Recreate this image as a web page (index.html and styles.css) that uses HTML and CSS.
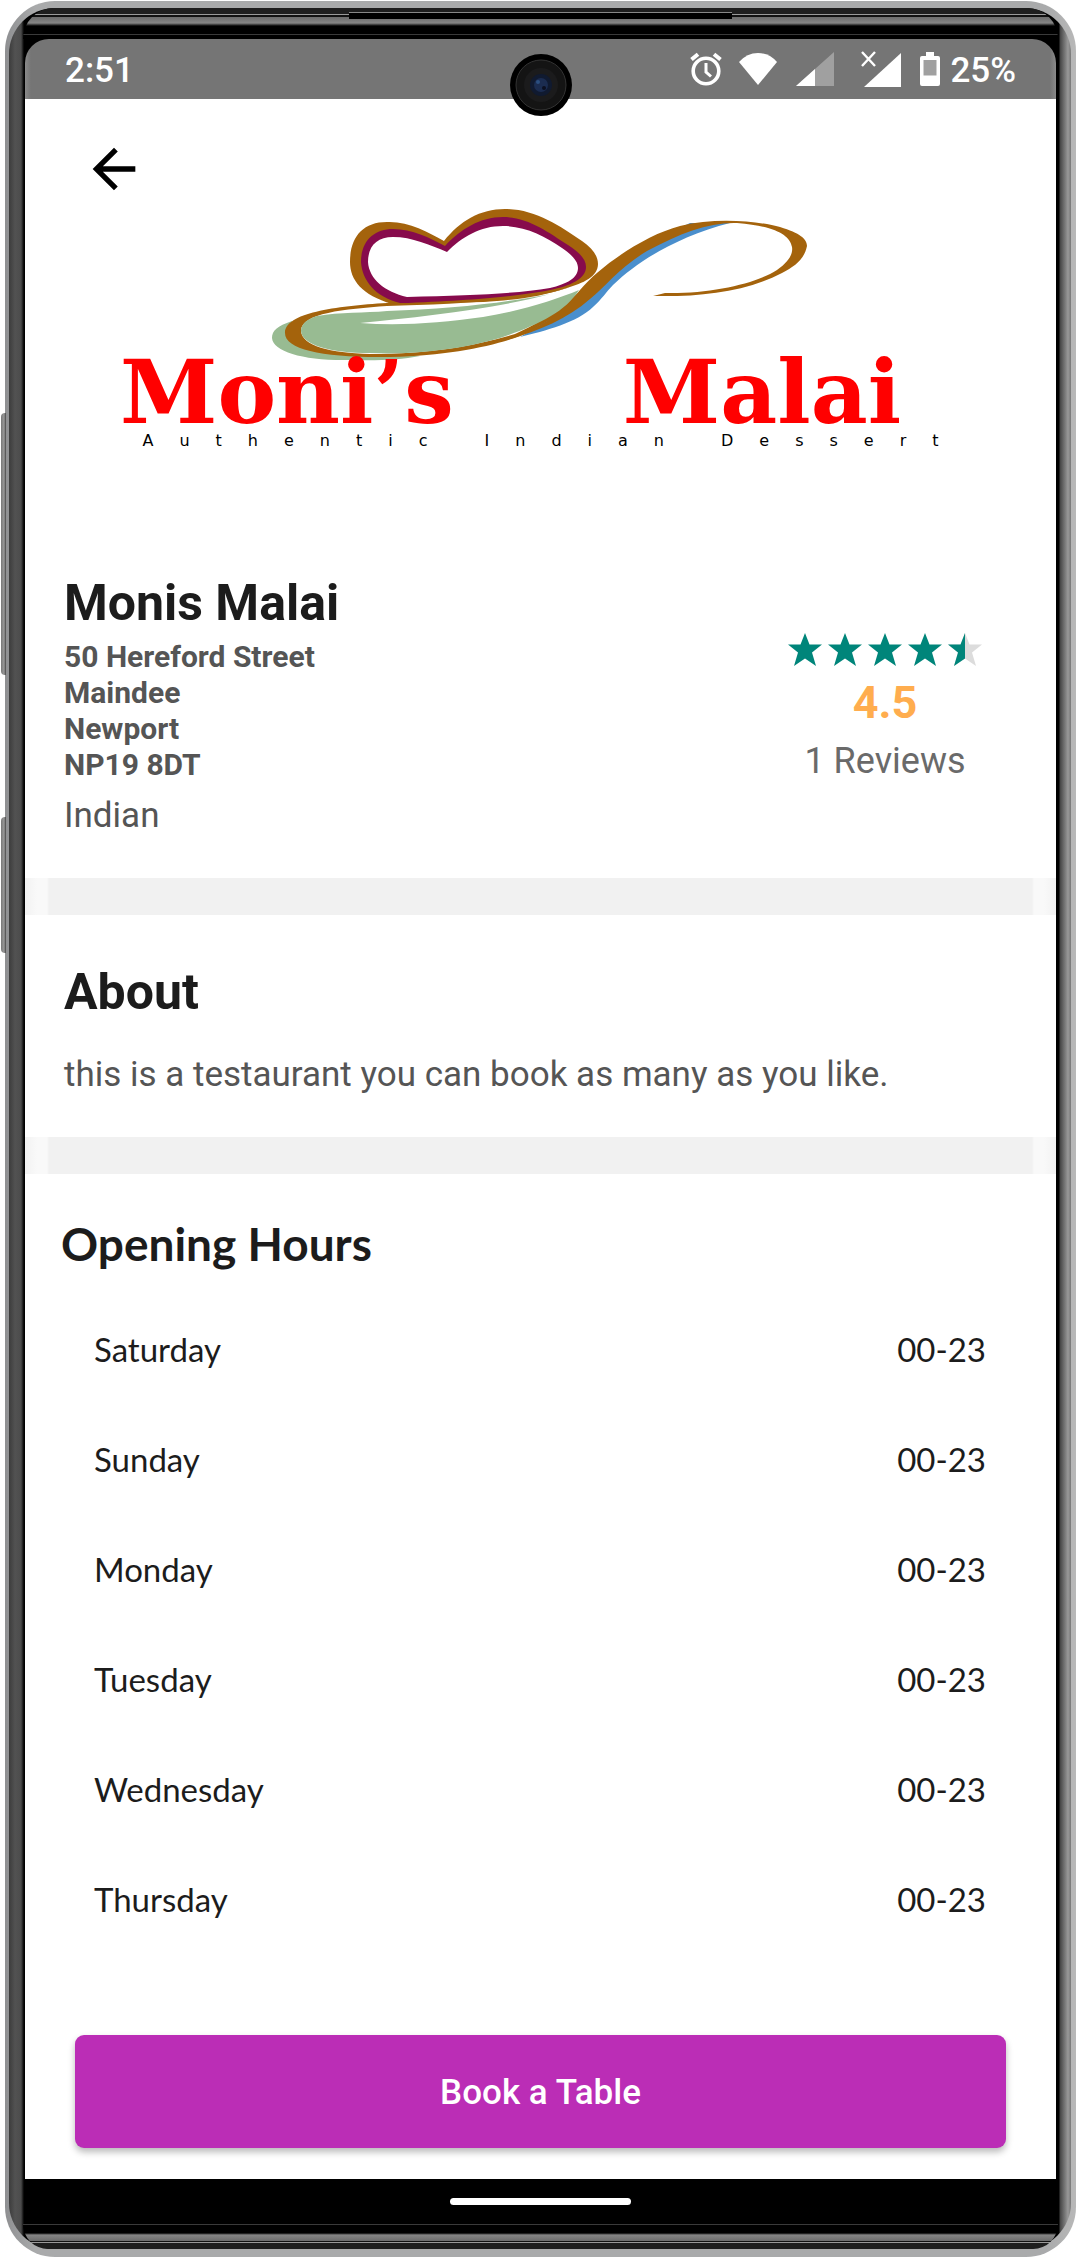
FILE: index.html
```html
<!DOCTYPE html>
<html lang="en">
<head>
<meta charset="utf-8">
<meta name="viewport" content="width=device-width, initial-scale=1">
<title>Monis Malai</title>
<link rel="stylesheet" href="styles.css">
</head>
<body>
<div class="phone">
  <span class="side-key side-key-volume"></span>
  <span class="side-key side-key-power"></span>
  <div class="bezel">
    <div class="edge edge-top"><span class="earpiece"></span></div>
    <div class="screen">
      <header class="status">
        <span class="clock">2:51</span>
        <div class="status-icons">
          <svg class="alarm" width="32" height="34" viewBox="0 0 32 34" fill="none" stroke="#fff"><circle cx="16" cy="19" r="12.8" stroke-width="3.6"/><path d="M16 11v9l5 4.500" stroke-width="3"/><path d="M1.500 7.500 8 2.200M30.500 7.500 24 2.200" stroke-width="4"/></svg>
          <svg class="wifi" width="38" height="34" viewBox="0 0 38 34" fill="#fff"><path d="M19 33 0 10Q8 1 19 1t19 9z"/></svg>
          <svg class="signal" width="38" height="34" viewBox="0 0 38 34"><path d="M38 0v34H0z" fill="#a0a0a0"/><path d="M19 17v17H0z" fill="#fff"/></svg>
          <svg class="signal-off" width="40" height="38" viewBox="0 0 40 38"><path d="M40 3v34H3z" fill="#fff"/><path d="m1 2 13 14M14 2 1 16" stroke="#fff" stroke-width="2.400"/></svg>
          <svg class="battery" width="20" height="34" viewBox="0 0 20 34"><path d="M6 0h8v4h4a2 2 0 0 1 2 2v26a2 2 0 0 1-2 2H2a2 2 0 0 1-2-2V6a2 2 0 0 1 2-2h4z" fill="#fff"/><path d="M3.500 8h13v15.500h-13z" fill="#a0a0a0"/></svg>
          <span>25%</span>
        </div>
        <svg class="camera" width="62" height="62" viewBox="0 0 62 62"><circle cx="31" cy="31" r="31"/><circle cx="31" cy="31" r="25" fill="#141414" stroke="#333"/><circle cx="31" cy="31" r="17" fill="#1b1b1c"/><circle cx="31" cy="31" r="11" fill="#101a30"/><circle cx="31" cy="31" r="7" fill="#1b2c50"/><circle cx="28" cy="28" r="2" fill="#2b4f80"/><circle cx="34" cy="34" r="2" fill="#0c1020"/></svg>
      </header>

      <main>
        <section class="hero">
          <button class="back" aria-label="Back"><svg width="64" height="64" viewBox="0 0 24 24"><path d="M20 11H7.830l5.590-5.590L12 4l-8 8 8 8 1.410-1.410L7.830 13H20z"/></svg></button>
          <svg class="art" width="542" height="160" viewBox="270 204 542 160">
            <path fill="#98bb92" d="M292 321C277 326 272 331 272 338C273 352 305 361 350 360C375 361 400 360 420 356L300 345Z"/>
            <path fill="#a4630c" d="M387 303C335 306 285 313 285 333C285 350 325 358 390 357C455 355 500 345 530 332C560 317 580 297 597 277L567 288C530 299 450 303 387 303Z"/>
            <path fill="#fff" d="M387 306C345 309 301 313 301 331C302 346 330 353 370 354C430 354 475 346 515 334C553 317 576 296 602 270L567 288C530 301 450 304 387 306Z"/>
            <path fill="#98bb92" d="M317 316C340 312 365 313 387 311C450 309 505 303 550 294C500 308 420 317 360 323C400 326 440 323 483 317C520 311 555 300 579 290C565 313 535 326 500 338C460 350 410 355 370 353C330 353 302 345 301 331C301 324 307 319 317 316Z"/>
            <path fill="#4a8fcd" d="M520 337C545 331 578 322 593 307C602 299 606 292 613 285C640 259 680 236 730 223L690 223L640 247L575 305Z"/>
            <path fill="#a4630c" d="M500 342C550 326 568 306 580 290C600 266 645 235 680 226C715 217 758 221 780 227C800 233 807 239 807 246C804 260 795 266 782 273C745 292 700 297 653 296L665 293C710 294 755 284 777 270C790 261 793 253 792 247C790 235 775 226 737 223C710 222 680 233 647 251C620 267 605 287 590 299C565 321 535 332 500 342Z"/>
            <path fill="#a4630c" d="M392 304C362 295 350 280 350 262C350 238 362 222 387 222C408 221 428 232 444 241C460 221 480 209 505 209C535 209 560 226 582 241C593 249 598 256 598 264C598 277 583 283 567 288C540 297 515 300 483 302Z"/>
            <path fill="#870b4c" d="M400 303C375 297 362 280 361 262C361 241 374 229 393 229C412 229 430 238 445 246C461 229 480 217 503 217C528 217 548 232 568 245C579 252 586 259 586 267C586 279 570 286 550 290C520 296 480 300 408 303Z"/>
            <path fill="#fff" d="M407 297C385 292 369 279 368 262C368 246 377 237 393 237C412 237 430 245 447 252C462 237 480 226 503 226C525 226 545 236 562 248C572 255 578 261 578 268C578 278 567 284 550 288C515 294 470 295 407 297Z"/>
          </svg>
          <div class="brand"><span>Moni’s</span> <span>Malai</span></div>
          <div class="tagline">Authentic Indian Dessert</div>
        </section>

        <section class="info">
          <div>
            <h1>Monis Malai</h1>
            <address>50 Hereford Street<br>Maindee<br>Newport<br>NP19 8DT</address>
            <p class="cuisine">Indian</p>
          </div>
          <div class="rating">
            <div class="stars" role="img" aria-label="4.5 out of 5 stars">
              <svg width="34" height="34" viewBox="0 0 34 34"><path d="m17 0 4.500 11.500H34l-10 8L28 33l-11-7.500L6 33l4-13.500-10-8h12.500z"/></svg>
              <svg width="34" height="34" viewBox="0 0 34 34"><path d="m17 0 4.500 11.500H34l-10 8L28 33l-11-7.500L6 33l4-13.500-10-8h12.500z"/></svg>
              <svg width="34" height="34" viewBox="0 0 34 34"><path d="m17 0 4.500 11.500H34l-10 8L28 33l-11-7.500L6 33l4-13.500-10-8h12.500z"/></svg>
              <svg width="34" height="34" viewBox="0 0 34 34"><path d="m17 0 4.500 11.500H34l-10 8L28 33l-11-7.500L6 33l4-13.500-10-8h12.500z"/></svg>
              <svg width="34" height="34" viewBox="0 0 34 34"><path class="star-off" d="m17 0 4.500 11.500H34l-10 8L28 33l-11-7.500L6 33l4-13.500-10-8h12.500z"/><path d="M17 0v25.500L6 33l4-13.500-10-8h12.500z"/></svg>
            </div>
            <div class="score">4.5</div>
            <div class="reviews">1 Reviews</div>
          </div>
        </section>

        <section class="about">
          <h2>About</h2>
          <p>this is a testaurant you can book as many as you like.</p>
        </section>

        <section class="hours">
          <h2>Opening Hours</h2>
          <table>
            <tr><th scope="row">Saturday</th><td>00-23</td></tr>
            <tr><th scope="row">Sunday</th><td>00-23</td></tr>
            <tr><th scope="row">Monday</th><td>00-23</td></tr>
            <tr><th scope="row">Tuesday</th><td>00-23</td></tr>
            <tr><th scope="row">Wednesday</th><td>00-23</td></tr>
            <tr><th scope="row">Thursday</th><td>00-23</td></tr>
          </table>
        </section>

        <div class="action"><button class="book">Book a Table</button></div>
      </main>
      <div class="nav"><span class="home-bar"></span></div>
    </div>
    <div class="edge edge-bottom"></div>
  </div>
</div>
</body>
</html>
```
FILE: styles.css
```css
* { box-sizing: border-box; }
body { margin: 0; background: #fff; font-family: Roboto, "Liberation Sans", sans-serif; color: #1c1c1c; }
h1, h2, p { margin: 0; }
button { border: 0; cursor: pointer; font: inherit; }
svg { display: block; flex: none; }

/* device shell */
.phone {
  position: relative;
  margin: 1px 1px 1px 5px;
  padding: 7px 5px 8px 4px;
  border-radius: 50px;
  background: linear-gradient(90deg, #8e8f91 0, #a9aaab 30px, #a9aaab calc(100% - 30px), #b8b8b8 100%);
}
.side-key {
  position: absolute;
  left: -4px;
  width: 5px;
  border-radius: 4px 0 0 4px;
  background: linear-gradient(90deg, #777, #999 60%, #444);
}
.side-key-volume { top: 412px; height: 262px; }
.side-key-power { top: 816px; height: 136px; }
.bezel {
  padding: 0 15px 0 16px;
  border-radius: 46px;
  background: linear-gradient(90deg, #3c3c3c 0, #525252 6px, #4c4c4c 12px, #000 15px, #000 calc(100% - 12px), #444 calc(100% - 11px), #999 calc(100% - 3px), #777 100%);
}
.edge { margin: 0 -2px; }
.edge-top {
  height: 31px;
  border-radius: 34px 34px 0 0;
  background: linear-gradient(#1e1e1e 0 6px, #999 6px 7px, #111 7px 9px, #6c6c6c 9px, #858585 15px, #000 18px, #000 26px, #3a3a3a 26px 27px, #000 27px);
}
.edge-bottom {
  height: 25px;
  border-radius: 0 0 34px 34px;
  background: linear-gradient(#3a3a3a 0 1px, #000 1px 9px, #858585 11px, #6c6c6c 17px, #111 17px 18px, #999 18px 19px, #1e1e1e 19px);
}
.earpiece {
  display: block;
  width: 37%;
  height: 7px;
  margin: 0 auto;
  border-top: 1px solid #888;
  background: #000;
  translate: 0 4px;
}
.screen { border-radius: 24px 24px 0 0; background: #000; }
main { background: #fff; }

.status {
  position: relative;
  display: flex;
  justify-content: space-between;
  align-items: center;
  height: 60px;
  padding: 0 40px;
  border-radius: 24px 24px 0 0;
  background: linear-gradient(90deg, #8a8a8a 0, #757575 6px, #757575 calc(100% - 6px), #8a8a8a 100%);
  color: #fff;
  font-size: 35px;
  font-weight: 500;
  line-height: 60px;
}
.status span { padding-top: 3px; }
.status-icons { display: flex; align-items: center; }
.wifi { margin-left: 17px; }
.signal { margin-left: 19px; }
.signal-off { margin-left: 27px; }
.battery { margin: 0 10px 0 19px; }
.camera { position: absolute; top: 15px; left: calc(50% - 31px); }

.hero {
  position: relative;
  display: flex;
  flex-direction: column;
  align-items: center;
  padding: 105px 92px 117px;
}
.back { position: absolute; top: 38px; left: 57px; padding: 0; background: none; }
.brand {
  display: grid;
  grid-template-columns: 4fr 3fr;
  column-gap: 48px;
  align-self: stretch;
  padding-left: 3px;
  color: #f00;
  font: bold 88px/56px "DejaVu Serif", serif;
}
.tagline {
  margin-top: 6px;
  padding-left: 26px;
  color: #000;
  font: 16px/30px "DejaVu Sans", sans-serif;
  letter-spacing: 26px;
  white-space: nowrap;
}

h1, .about h2 { font-size: 50px; font-weight: 700; line-height: 60px; }
.info { display: flex; justify-content: space-between; padding: 0 74px 41px 39px; }
address { margin-top: 6px; color: #555; font-size: 30px; font-style: normal; font-weight: 700; line-height: 36px; }
.cuisine { margin-top: 12px; color: #555; font-size: 35px; line-height: 42px; }
.rating { padding-top: 60px; text-align: center; }
.stars { display: flex; gap: 6px; fill: #00857a; }
.star-off { fill: #dcdcdc; }
.score { margin-top: 12px; color: #ffad4e; font-size: 45px; font-weight: 700; line-height: 48px; }
.reviews { margin-top: 13px; color: #6a6a6a; font-size: 36px; line-height: 42px; }

.about, .hours { border-top: 37px solid #f1f1f1; border-image: linear-gradient(90deg, #f2f2f2 0, #f9f9f9 12px 22px, #f1f1f1 24px calc(100% - 24px), #f9f9f9 calc(100% - 22px) calc(100% - 12px), #f2f2f2 100%) 37 0 0; }
.about { padding: 47px 39px 41px; }
.about p { margin-top: 32px; color: #555; font-size: 35px; line-height: 42px; }
.hours { padding: 42px 36px 0; }
.hours h2 { font: 700 46px/56px Lato, sans-serif; }
.hours table {
  width: 100%;
  margin-top: 22px;
  border-collapse: collapse;
  font: 33px/110px Lato, sans-serif;
}
.hours th { padding: 0 0 0 33px; font-weight: 400; text-align: left; }
.hours td { padding: 0 34px 0 0; text-align: right; }

.action { padding: 81px 50px 31px; }
.book {
  display: block;
  width: 100%;
  padding: 37px 0 34px;
  border-radius: 9px;
  background: #bb2db6;
  box-shadow: 0 4px 7px rgba(0, 0, 0, .28);
  color: #fff;
  font-size: 35px;
  font-weight: 500;
  line-height: 42px;
}
.nav { display: flex; justify-content: center; padding: 19px 0; background: #000; }
.home-bar { width: 181px; height: 7px; border-radius: 4px; background: #fff; }
```
